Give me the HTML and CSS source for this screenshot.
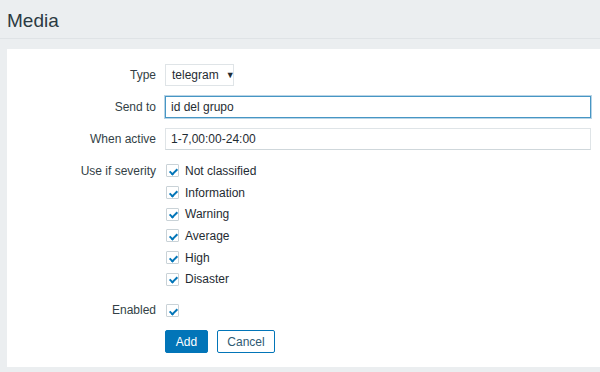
FILE: index.html
```html
<!DOCTYPE html>
<html lang="en">
<head>
  <meta charset="UTF-8" />
  <title>Media</title>
  <link rel="stylesheet" href="styles.css">
</head>
<body>
  <header class="page-title">
    <h1>Media</h1>
  </header>

  <main class="panel">
    <form class="media-form">
      <div class="row">
        <label class="label">Type</label>
        <div class="field">
          <div class="select">telegram <span class="arrow">&#9660;</span></div>
        </div>
      </div>
      <div class="row">
        <label class="label">Send to</label>
        <div class="field">
          <input class="text-input focused" type="text" value="id del grupo" />
        </div>
      </div>
      <div class="row">
        <label class="label">When active</label>
        <div class="field">
          <input class="text-input" type="text" value="1-7,00:00-24:00" />
        </div>
      </div>
      <div class="row row-top">
        <label class="label">Use if severity</label>
        <div class="field checklist">
          <div class="check-item"><span class="checkbox"></span>Not classified</div>
          <div class="check-item"><span class="checkbox"></span>Information</div>
          <div class="check-item"><span class="checkbox"></span>Warning</div>
          <div class="check-item"><span class="checkbox"></span>Average</div>
          <div class="check-item"><span class="checkbox"></span>High</div>
          <div class="check-item"><span class="checkbox"></span>Disaster</div>
        </div>
      </div>
      <div class="row enabled">
        <label class="label">Enabled</label>
        <div class="field">
          <span class="checkbox"></span>
        </div>
      </div>
      <div class="row actions">
        <div class="label"></div>
        <div class="field buttons">
          <button type="button" class="btn btn-main">Add</button>
          <button type="button" class="btn btn-alt">Cancel</button>
        </div>
      </div>
    </form>
  </main>
</body>
</html>
```

FILE: styles.css
```css
body {
  margin: 0;
  font-family: Arial, "Liberation Sans", sans-serif;
  font-size: 12px;
  color: #1f2c33;
  background-color: #ebeef0;
  height: 372px;
  overflow: hidden;
}
.page-title {
  height: 38px;
  margin-bottom: 10px;
  border-bottom: 1px solid #dfe3e6;
}
.page-title h1 {
  margin: 0;
  padding: 10px 0 0 7px;
  font-size: 19px;
  font-weight: normal;
  line-height: 22px;
  color: #2b3a42;
}
.panel {
  background-color: #fff;
  margin-left: 7px;
  height: 318px;
  padding: 15px 0 0 0;
  box-sizing: border-box;
}
.media-form {
  display: flex;
  flex-direction: column;
  gap: 10px;
}
.row {
  display: flex;
  align-items: center;
  min-height: 22px;
}
.row-top {
  align-items: flex-start;
}
.enabled {
  margin-top: -1px;
}
.actions {
  margin-top: -1px;
}
.label {
  width: 149px;
  padding-right: 9px;
  text-align: right;
  line-height: 22px;
  color: #333f46;
}
.field {
  flex: 1;
  padding-right: 9px;
}
.select {
  display: inline-flex;
  align-items: center;
  height: 22px;
  box-sizing: border-box;
  padding: 0 6px 0 6px;
  border: 1px solid #dfe4e7;
  width: 69px;
  gap: 7px;
}
.arrow {
  font-size: 9px;
}
.text-input {
  width: 100%;
  height: 22px;
  box-sizing: border-box;
  border: 1px solid #dfe4e7;
  border-bottom-color: #cfd7db;
  padding: 0 5px;
  font-family: inherit;
  font-size: 12px;
  color: #1f2c33;
  outline: none;
}
.text-input.focused {
  border: 1px solid #4796c4;
  box-shadow: 0 0 0 1px #b8d4e6;
}
.checklist {
  display: flex;
  flex-direction: column;
}
.check-item {
  display: flex;
  align-items: center;
  height: 21.7px;
}
.checkbox {
  display: inline-block;
  position: relative;
  width: 13px;
  height: 13px;
  box-sizing: border-box;
  border: 1px solid #c9d2d7;
  border-radius: 1px;
  margin: 0 6px 0 1px;
  vertical-align: middle;
}
.checkbox::after {
  content: "";
  position: absolute;
  left: 3.5px;
  top: 1.5px;
  width: 3px;
  height: 6px;
  border: solid #0275b8;
  border-width: 0 2px 2px 0;
  transform: rotate(45deg);
}
.buttons {
  display: flex;
  gap: 9px;
}
.btn {
  height: 23px;
  box-sizing: border-box;
  font-family: inherit;
  font-size: 12px;
  border-radius: 2px;
  padding: 0;
  cursor: pointer;
}
.btn-main {
  background-color: #0275b8;
  border: 1px solid #0275b8;
  color: #fff;
  width: 43px;
}
.btn-alt {
  background-color: #fff;
  border: 1px solid #0275b8;
  color: #2f5a73;
  width: 58px;
}
```
